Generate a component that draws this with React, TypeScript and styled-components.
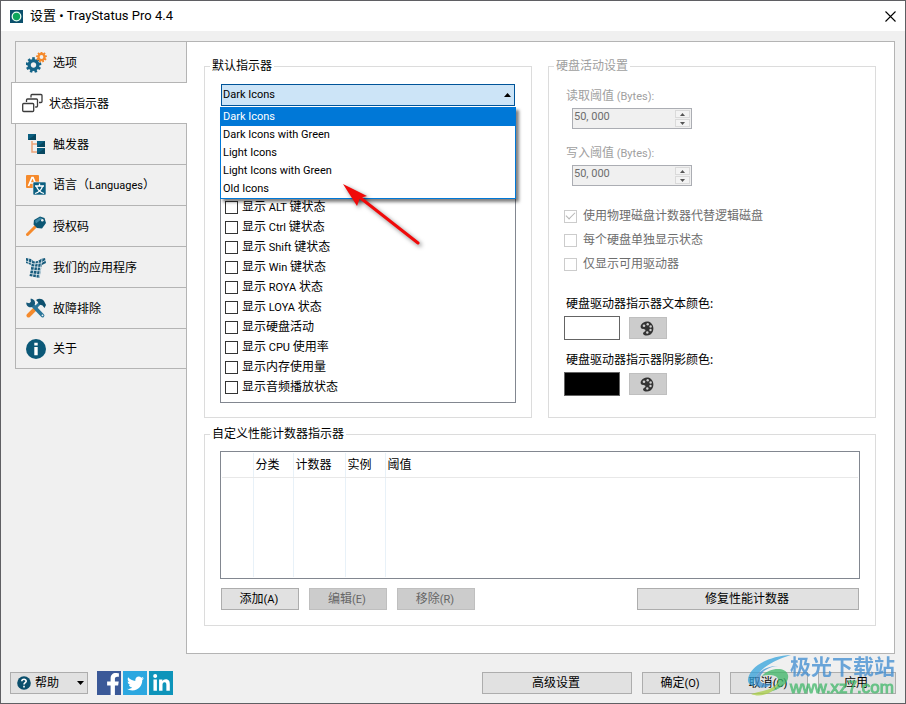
import React from "react";
import styled, { createGlobalStyle, css } from "styled-components";
import { FaFacebookF, FaLinkedinIn, FaTwitter } from "react-icons/fa";

const GlobalStyle = createGlobalStyle`
  *, *::before, *::after { box-sizing: border-box; }
  body {
    margin: 0;
    background: #f0f0f0;
    color: #000;
    font-family: "Noto Sans", "Noto Sans CJK SC", sans-serif;
    font-size: 12px;
    line-height: 16px;
  }
  button, input, select {
    font: inherit;
    color: inherit;
  }
`;

const latin = css`
  font-family: Roboto, "Noto Sans CJK SC", sans-serif;
  font-size: 11px;
`;

const Window = styled.div`
  display: flex;
  flex-direction: column;
  min-height: 100vh;
  border: 1px solid #5f5f63;
  background: #f0f0f0;
`;

const TitleBar = styled.header`
  display: flex;
  align-items: center;
  height: 30px;
  padding: 0 9px;
  background: #fff;
`;

const Title = styled.h1`
  flex: 1;
  margin: 0 0 0 7px;
  font-family: Roboto, "Noto Sans CJK SC", sans-serif;
  font-size: 13px;
  font-weight: 400;
`;

const CloseButton = styled.button`
  display: flex;
  padding: 0;
  border: 0;
  background: none;
`;

const Body = styled.main`
  flex: 1;
  display: flex;
  padding: 10px 10px 0 14px;
`;

const Tabs = styled.nav`
  width: 171px;
  flex: none;
`;

const Tab = styled.button<{ $selected?: boolean }>`
  display: flex;
  align-items: center;
  gap: 6px;
  width: 100%;
  height: 41px;
  padding: 1px 0 0 10px;
  border: solid #b4b4b4;
  border-width: 1px 0 0 1px;
  background: #f0f0f0;
  text-align: left;
  &:last-child {
    border-bottom-width: 1px;
  }
  ${(p) =>
    p.$selected &&
    css`
      position: relative;
      width: calc(100% + 5px);
      height: 42px;
      margin: 0 -1px -1px -4px;
      background: #fff;
      border-bottom-width: 1px;
    `}
`;

const Panel = styled.section`
  flex: 1;
  display: grid;
  grid-template-columns: 1fr 1fr;
  grid-template-rows: auto auto;
  align-content: start;
  gap: 8px 16px;
  padding: 16px 18px 26px 17px;
  border: 1px solid #b4b4b4;
  background: #fff;
`;

const Group = styled.fieldset<{ $wide?: boolean }>`
  min-width: 0;
  margin: 0;
  padding: 0 15px 14px;
  border: 1px solid #dcdcdc;
  ${(p) => p.$wide && "grid-column: 1 / -1; padding-bottom: 15px;"}
`;

const Legend = styled.legend<{ $muted?: boolean }>`
  margin-left: -10px;
  padding: 0 2px;
  color: ${(p) => (p.$muted ? "#a0a0a0" : "#000")};
`;

const Small = styled.span`
  ${latin}
`;

const Picker = styled.div`
  position: relative;
  padding-top: 10px;
`;

const SelectBox = styled.div`
  position: relative;
  display: flex;
  margin: 0 1px;
  svg {
    position: absolute;
    right: 4px;
    top: 9px;
  }
`;

const Select = styled.select`
  appearance: none;
  width: 100%;
  height: 22px;
  padding: 0 1px;
  border: 1px solid #005499;
  border-radius: 0;
  background: #cce4f7;
  ${latin}
`;

const Popup = styled.ul`
  position: absolute;
  top: 33px;
  left: 0;
  right: 0;
  margin: 0;
  padding: 0;
  list-style: none;
  border: 1px solid #0078d7;
  background: #fff;
  box-shadow: 3px 3px 3px rgba(0, 0, 0, 0.5);
`;

const Choice = styled.li<{ $active: boolean }>`
  height: 18px;
  padding: 0 2px;
  ${latin}
  line-height: 18px;
  color: ${(p) => (p.$active ? "#fff" : "#000")};
  background: ${(p) => (p.$active ? "#0078d7" : "#fff")};
`;

const CheckList = styled.div`
  display: flex;
  flex-direction: column;
  margin-top: 1px;
  padding: 89px 4px 5px;
  border: 1px solid #828790;
`;

const CheckLabel = styled.label<{ $muted?: boolean }>`
  display: flex;
  align-items: center;
  gap: 4px;
  height: 20px;
  ${(p) => p.$muted && "gap: 6px; height: 24px; color: #6d6d6d;"}
`;

const Check = styled.input`
  appearance: none;
  display: grid;
  place-items: center;
  width: 13px;
  height: 13px;
  margin: 0;
  border: 1px solid #333;
  background: #fff;
  &:disabled {
    border-color: #ccc;
  }
  &:checked::before {
    content: "";
    width: 9px;
    height: 5px;
    margin-top: -3px;
    border: solid #b5b5b5;
    border-width: 0 0 1px 1px;
    transform: rotate(-45deg);
  }
`;

const Arrow = styled.svg`
  position: absolute;
  left: 118px;
  top: 104px;
  pointer-events: none;
  filter: drop-shadow(2px 2px 2px rgba(0, 0, 0, 0.5));
`;

const Thresholds = styled.div`
  display: grid;
  gap: 16px;
  padding: 14px 0 18px;
`;

const Field = styled.div`
  display: flex;
  flex-direction: column;
  gap: 3px;
`;

const FieldLabel = styled.label<{ $muted?: boolean }>`
  margin-left: 2px;
  color: ${(p) => (p.$muted ? "#a0a0a0" : "#000")};
`;

const Spinner = styled.div`
  display: flex;
  width: 120px;
  height: 21px;
  margin-left: 8px;
  border: 1px solid #abadb3;
  background: #f0f0f0;
`;

const SpinInput = styled.input`
  flex: 1;
  min-width: 0;
  height: 16px;
  padding: 0 1px;
  border: 0;
  background: none;
  color: #6d6d6d;
  ${latin}
`;

const SpinButtons = styled.div`
  display: grid;
  grid-template-rows: 8px 8px;
  gap: 1px;
  width: 16px;
  padding: 1px 1px 1px 0;
`;

const SpinButton = styled.button`
  display: grid;
  place-items: center;
  padding: 0;
  border: 1px solid #dadada;
  background: #f3f3f3;
  color: #555;
`;

const ColorField = styled.div`
  padding-top: 20px;
  & + & {
    padding-top: 12px;
  }
`;

const ColorRow = styled.div`
  display: flex;
  align-items: center;
  gap: 9px;
  margin-top: 4px;
`;

const Swatch = styled.output<{ $color: string }>`
  width: 56px;
  height: 24px;
  border: 1px solid #646464;
  background: ${(p) => p.$color};
`;

const PushButton = styled.button<{ $width: number }>`
  display: flex;
  align-items: center;
  justify-content: center;
  width: ${(p) => p.$width}px;
  height: 22px;
  padding: 0 2px 0 0;
  border: 1px solid #adadad;
  background: #e1e1e1;
  &:disabled {
    border-color: #bfbfbf;
    background: #ccc;
    color: #666;
  }
`;

const TableFrame = styled.div`
  height: 128px;
  margin-top: 9px;
  padding: 1px;
  border: 1px solid #828790;
`;

const Table = styled.table`
  width: 100%;
  height: 100%;
  table-layout: fixed;
  border-collapse: collapse;
  th {
    height: 24px;
    padding: 0 0 0 2px;
    border-bottom: 1px solid #e8e8e8;
    font-weight: 400;
    text-align: left;
  }
  td {
    height: 100px;
    padding: 0;
  }
  th + th,
  td + td {
    border-left: 1px solid #e8f1f8;
  }
`;

const ButtonRow = styled.div`
  display: flex;
  gap: 10px;
  margin: 9px 1px 0;
`;

const Spacer = styled.span`
  flex: 1;
`;

const Footer = styled.footer`
  position: relative;
  display: flex;
  align-items: center;
  gap: 10px;
  padding: 17px 9px 8px;
`;

const HelpButton = styled(PushButton)`
  justify-content: flex-start;
  gap: 4px;
  padding: 0 3px 0 6px;
`;

const Socials = styled.div`
  display: flex;
  gap: 2px;
  margin-left: -1px;
`;

const Social = styled.a<{ $color: string; $end?: boolean }>`
  display: flex;
  align-items: center;
  justify-content: center;
  width: 24px;
  height: 24px;
  color: #fff;
  background: ${(p) => p.$color};
  ${(p) => p.$end && "align-items: flex-end; padding-left: 8px;"}
  svg {
    flex: none;
  }
`;

const Watermark = styled.div`
  position: absolute;
  right: 10px;
  top: 0;
  display: flex;
  opacity: 0.75;
  pointer-events: none;
`;

const MarkText = styled.div`
  display: flex;
  flex-direction: column;
  margin-left: -3px;
  font-weight: 700;
  color: #3c8bd0;
  font-size: 21px;
  line-height: 24px;
`;

const MarkSite = styled.span`
  color: #3fb768;
  font-family: "Liberation Sans", sans-serif;
  font-size: 17px;
  font-weight: 400;
  line-height: 20px;
  -webkit-text-stroke: 1px #3fb768;
`;

const BLUE = "#0b5f80";
const ORANGE = "#f58a2c";

function Mixed({ text }: { text: string }) {
  return (
    <span>
      {text.split(/([\x20-\x7e]+)/).map((part, i) =>
        i % 2 ? <Small key={i}>{part}</Small> : part
      )}
    </span>
  );
}

function Gear({ x, y, r, color }: { x: number; y: number; r: number; color: string }) {
  const teeth = Array.from({ length: 9 }, (_, i) => i * 40);
  return (
    <g transform={`translate(${x} ${y})`}>
      {teeth.map((a) => (
        <rect key={a} x={-r * 0.17} y={-r} width={r * 0.34} height={r * 0.4} fill={color} transform={`rotate(${a})`} />
      ))}
      <circle r={r * 0.56} fill="none" stroke={color} strokeWidth={r * 0.42} />
    </g>
  );
}

const GearsIcon = () => (
  <>
    <Gear x={7.5} y={13} r={7.8} color="#146488" />
    <Gear x={15.5} y={5} r={5.4} color={ORANGE} />
  </>
);

const WindowsIcon = () => (
  <g fill="#fff" stroke="#3c3c3c" strokeWidth="1.3">
    <rect x="9" y="1.5" width="11" height="8" rx="1" />
    <rect x="4.500" y="6" width="11" height="8" rx="1" stroke="#fff" strokeWidth="3" />
    <rect x="4.500" y="6" width="11" height="8" rx="1" />
    <rect x="0.7" y="10.5" width="11" height="8" rx="1" stroke="#fff" strokeWidth="3" />
    <rect x="0.7" y="10.5" width="11" height="8" rx="1" />
  </g>
);

const TreeIcon = () => (
  <>
    <path d="M6 7v11h5M6 10h5" fill="none" stroke="#eba277" strokeWidth="1.5" />
    <path d="M2 0h8v6H2zM11 7h8v6h-8zM11 14h8v6h-8z" fill={BLUE} />
    <path d="M2 6l8-6v6zM11 13l8-6v6zM11 20l8-6v6z" fill="#07475f" />
  </>
);

const LanguageIcon = () => (
  <>
    <rect x="0" y="0" width="13" height="13" rx="1" fill={ORANGE} />
    <path d="M2.5 11L6 2.5h1L10.5 11M4 8h5" fill="none" stroke="#fff" strokeWidth="1.7" />
    <rect x="7" y="7" width="13" height="13" rx="1" fill={BLUE} stroke="#f0f0f0" strokeWidth="0.6" />
    <path d="M13.5 8.5v2M9 11h9M10.5 11.5c1.5 4 4 6 7.5 7M16.5 11.5c-1.5 4-4 6-7.5 7" fill="none" stroke="#fff" strokeWidth="1.3" />
  </>
);

const KeyIcon = () => (
  <>
    <path d="M1.5 18.5L11 9" stroke={ORANGE} strokeWidth="3" strokeLinecap="round" />
    <path d="M8 4L14 .5l4.500 1.500 1.500 5-4 5.500-5-.5L7.500 8.500z" fill="#0b5673" />
    <path d="M9 4.800L14 1.500l2.500 1-6.500 5z" fill="#3c87a6" />
    <circle cx="16.300" cy="4.300" r="1.300" fill="#f0f0f0" />
  </>
);

const ShirtIcon = () => (
  <>
    <path d="M0 1l5 1 3 2.500 4-.5 3-2 4-1 1 5-4 2-1 4-1.500 9-10-2L5 12 5 8 0 6z" fill="#175b7c" />
    <path d="M3 0L2 8M6 2L5 9M9.500 4L6.500 20M12.500 4l-2.500 17M16 2l-3 19M0 4l8 3 7-1 5-3M4 9.500l12 1M4 13l12 1M4 16.500l11 1.500" fill="none" stroke="#e4edf1" strokeWidth="0.8" />
  </>
);

const ToolsIcon = () => (
  <>
    <path d="M2.500 17.500L10 10" stroke={ORANGE} strokeWidth="4" strokeLinecap="round" />
    <path d="M9 10l5-5" stroke="#2b769a" strokeWidth="3" />
    <path d="M10 2c3-2 6-1.500 8 1l2 4-1.500 3-2-2.500-3-1-2-3z" fill="#0d506e" />
    <path d="M6.500 7l10 10.500" stroke="#2b769a" strokeWidth="3.800" strokeLinecap="round" />
    <path d="M4.500.8l.4 3L3.200 5.200.3 4.500C0 7.800 3 10 6 9l3-3C9.500 3 7.500.6 4.500.8z" fill="#17597a" />
    <circle cx="16.500" cy="17.300" r="0.900" fill="#f0f0f0" />
  </>
);

const InfoIcon = () => (
  <>
    <circle cx="10" cy="10" r="10" fill="#0b5877" />
    <path d="M8.300 3.800h3.400v2.800H8.300zM8.300 8h3.400v8.300H8.300z" fill="#fff" />
  </>
);

const PaletteIcon = () => (
  <svg width="14" height="15" viewBox="0 0 14 15">
    <path d="M1 4C3 .5 8-.5 11 2c3.500 3 3 9-.5 11.500-3 2-7.500 1-7.500-1 0-1.800 2.500-1.500 2.500-3.200C5.500 7.500 2 8.500 1 7 .5 6 .5 5 1 4z" fill="#333" />
    <g fill="#ccc">
      <circle cx="4" cy="4.700" r="1.300" />
      <circle cx="7.700" cy="3.300" r="1.200" />
      <circle cx="10.600" cy="5.500" r="1.200" />
      <circle cx="10.500" cy="9" r="1.200" />
      <circle cx="7.300" cy="11.500" r="1.200" />
    </g>
  </svg>
);

const TABS: [string, () => React.ReactElement][] = [
  ["选项", GearsIcon],
  ["状态指示器", WindowsIcon],
  ["触发器", TreeIcon],
  ["语言（Languages）", LanguageIcon],
  ["授权码", KeyIcon],
  ["我们的应用程序", ShirtIcon],
  ["故障排除", ToolsIcon],
  ["关于", InfoIcon],
];

const ICON_SETS = ["Dark Icons", "Dark Icons with Green", "Light Icons", "Light Icons with Green", "Old Icons"];

const INDICATORS = [
  "显示 ALT 键状态",
  "显示 Ctrl 键状态",
  "显示 Shift 键状态",
  "显示 Win 键状态",
  "显示 ROYA 状态",
  "显示 LOYA 状态",
  "显示硬盘活动",
  "显示 CPU 使用率",
  "显示内存使用量",
  "显示音频播放状态",
];

function Threshold({ id, label }: { id: string; label: string }) {
  return (
    <Field>
      <FieldLabel $muted htmlFor={id}>
        <Mixed text={label} />
      </FieldLabel>
      <Spinner>
        <SpinInput id={id} defaultValue="50, 000" disabled />
        <SpinButtons>
          <SpinButton disabled aria-label="增加">
            <svg width="5" height="3"><path d="M0 3L2.500 0 5 3z" fill="currentColor" /></svg>
          </SpinButton>
          <SpinButton disabled aria-label="减少">
            <svg width="5" height="3"><path d="M0 0l2.500 3L5 0z" fill="currentColor" /></svg>
          </SpinButton>
        </SpinButtons>
      </Spinner>
    </Field>
  );
}

function ColorSetting({ id, label, color }: { id: string; label: string; color: string }) {
  return (
    <ColorField>
      <FieldLabel htmlFor={id}>{label}</FieldLabel>
      <ColorRow>
        <Swatch id={id} $color={color} />
        <PushButton $width={38} disabled aria-label={label}>
          <PaletteIcon />
        </PushButton>
      </ColorRow>
    </ColorField>
  );
}

export default function App() {
  return (
    <Window>
      <GlobalStyle />
      <TitleBar>
        <svg width="13" height="13" viewBox="0 0 13 13">
          <rect width="13" height="13" fill="#0b506c" />
          <circle cx="6.500" cy="6.500" r="4.300" fill="#0ca65b" stroke="#e6fff2" strokeWidth="1.300" />
        </svg>
        <Title>设置 • TrayStatus Pro 4.4</Title>
        <CloseButton aria-label="关闭">
          <svg width="11" height="11" viewBox="0 0 11 11">
            <path d="M.5.5l10 10M10.500.5l-10 10" stroke="#000" strokeWidth="1.100" />
          </svg>
        </CloseButton>
      </TitleBar>

      <Body>
        <Tabs>
          {TABS.map(([name, Icon], i) => (
            <Tab key={name} $selected={i === 1}>
              <svg width="21" height="21" viewBox="0 0 21 21">
                <Icon />
              </svg>
              <Mixed text={name} />
            </Tab>
          ))}
        </Tabs>

        <Panel>
          <Group>
            <Legend>默认指示器</Legend>
            <Picker>
              <SelectBox>
                <Select aria-label="默认指示器" defaultValue={ICON_SETS[0]}>
                  {ICON_SETS.map((s) => (
                    <option key={s}>{s}</option>
                  ))}
                </Select>
                <svg width="7" height="4"><path d="M0 4l3.500-4L7 4z" /></svg>
              </SelectBox>
              <CheckList>
                {INDICATORS.map((text) => (
                  <CheckLabel key={text}>
                    <Check type="checkbox" />
                    <Mixed text={text} />
                  </CheckLabel>
                ))}
              </CheckList>
              <Popup role="listbox" aria-label="默认指示器">
                {ICON_SETS.map((s, i) => (
                  <Choice key={s} role="option" aria-selected={i === 0} $active={i === 0}>
                    {s}
                  </Choice>
                ))}
              </Popup>
              <Arrow width="90" height="72" viewBox="0 0 90 72">
                <path d="M20 18L80 65" stroke="#f00a0a" strokeWidth="3" strokeLinecap="round" />
                <path d="M5 6l24 12-7 2-3 8z" fill="#f00a0a" />
              </Arrow>
            </Picker>
          </Group>

          <Group>
            <Legend $muted>硬盘活动设置</Legend>
            <Thresholds>
              <Threshold id="read" label="读取阈值 (Bytes):" />
              <Threshold id="write" label="写入阈值 (Bytes):" />
            </Thresholds>
            <CheckLabel $muted>
              <Check type="checkbox" defaultChecked disabled />
              使用物理磁盘计数器代替逻辑磁盘
            </CheckLabel>
            <CheckLabel $muted>
              <Check type="checkbox" disabled />
              每个硬盘单独显示状态
            </CheckLabel>
            <CheckLabel $muted>
              <Check type="checkbox" disabled />
              仅显示可用驱动器
            </CheckLabel>
            <ColorSetting id="text-color" label="硬盘驱动器指示器文本颜色:" color="#fff" />
            <ColorSetting id="shadow-color" label="硬盘驱动器指示器阴影颜色:" color="#000" />
          </Group>

          <Group $wide>
            <Legend>自定义性能计数器指示器</Legend>
            <TableFrame>
              <Table>
                <colgroup>
                  <col width="31" />
                  <col width="40" />
                  <col width="52" />
                  <col width="40" />
                  <col />
                </colgroup>
                <thead>
                  <tr>
                    <th />
                    <th>分类</th>
                    <th>计数器</th>
                    <th>实例</th>
                    <th>阈值</th>
                  </tr>
                </thead>
                <tbody>
                  <tr>
                    <td /><td /><td /><td /><td />
                  </tr>
                </tbody>
              </Table>
            </TableFrame>
            <ButtonRow>
              <PushButton $width={78}><Mixed text="添加(A)" /></PushButton>
              <PushButton $width={78} disabled><Mixed text="编辑(E)" /></PushButton>
              <PushButton $width={78} disabled><Mixed text="移除(R)" /></PushButton>
              <Spacer />
              <PushButton $width={222}>修复性能计数器</PushButton>
            </ButtonRow>
          </Group>
        </Panel>
      </Body>

      <Footer>
        <HelpButton $width={78}>
          <svg width="14" height="14" viewBox="0 0 14 14">
            <circle cx="7" cy="7" r="6.800" fill="#0b4f6c" />
            <path d="M4.800 5.300C4.800 2.500 9.300 2.600 9.200 5.300 9.100 6.800 7 6.700 7 8.600M7 9.800v1.600" fill="none" stroke="#fff" strokeWidth="1.600" />
          </svg>
          帮助
          <Spacer />
          <svg width="7" height="4"><path d="M0 0h7L3.500 4z" /></svg>
        </HelpButton>
        <Socials>
          <Social href="#facebook" aria-label="Facebook" $color="#3b5998" $end>
            <FaFacebookF size={22} />
          </Social>
          <Social href="#twitter" aria-label="Twitter" $color="#2ca7e0">
            <FaTwitter size={17} />
          </Social>
          <Social href="#linkedin" aria-label="LinkedIn" $color="#0e94ba">
            <FaLinkedinIn size={19} />
          </Social>
        </Socials>
        <Spacer />
        <PushButton $width={150}>高级设置</PushButton>
        <PushButton $width={78}><Mixed text="确定(O)" /></PushButton>
        <PushButton $width={78}><Mixed text="取消(C)" /></PushButton>
        <PushButton $width={78}>应用</PushButton>
        <Watermark>
          <svg width="46" height="44" viewBox="0 0 46 44">
            <path d="M44 1C22 2 3 12 1 25c-.5 4 2 6 6 7C5 21 20 8 44 1z" fill="#35a3dc" />
            <path d="M8 30C5 20 20 11 31 12c-11 1-19 7-18 14 .5 4 8 5 13 2-3 6-14 8-18 2z" fill="#4193d2" />
            <path d="M15 22c8-9 24-9 26-1 2 9-12 17-25 18 9-4 16-9 15-14-1-4-9-5-16-3z" fill="#3fb768" />
            <path d="M33 27C27 36 15 37 4 40c9 4 24 0 29-13z" fill="#a9cf45" />
          </svg>
          <MarkText>
            极光下载站
            <MarkSite>www.xz7.com</MarkSite>
          </MarkText>
        </Watermark>
      </Footer>
    </Window>
  );
}
